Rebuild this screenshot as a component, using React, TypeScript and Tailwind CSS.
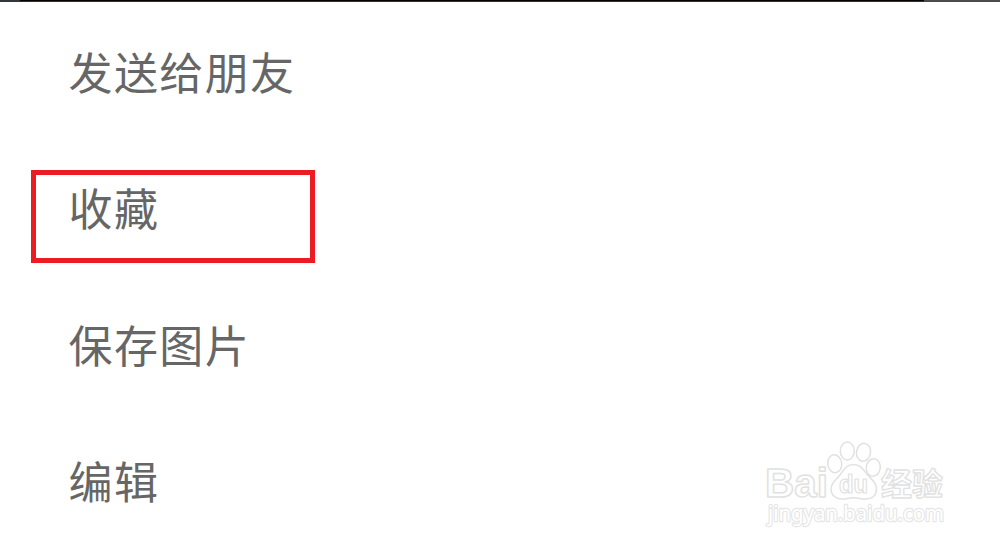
const menuItems = [
    { label: '发送给朋友' },
    { label: '收藏', highlighted: true },
    { label: '保存图片' },
    { label: '编辑' },
];

const Watermark = () => {
    return (
        <svg
            className="absolute left-[750px] top-[430px]"
            width="210"
            height="105"
            viewBox="0 0 210 105"
            fill="#fff"
            stroke="#e1e1e1"
            strokeWidth="1.5"
            strokeLinejoin="round"
        >
            {/* Paw */}
            <ellipse cx="84.7" cy="33.7" rx="7" ry="9" transform="rotate(-8 84.7 33.7)" />
            <ellipse cx="97.3" cy="21" rx="7" ry="9" />
            <ellipse cx="113.5" cy="22.3" rx="7" ry="9" transform="rotate(10 113.5 22.3)" />
            <ellipse cx="123.3" cy="37.5" rx="7" ry="8.8" transform="rotate(8 123.3 37.5)" />
            <path d="M103.5 34.5C96 34.5 93.5 40.5 90 45C86 50 81 52.5 81 59C81 65 85.5 69 92 69C96.5 69 99 67.8 103.5 67.8C108 67.8 111 69 115.5 69C122 69 126.5 65.5 126.5 59C126.5 52.5 122 50 117.5 45C113.5 40 111 34.5 103.5 34.5Z" />
            <text
                x="15"
                y="66.5"
                fontSize="41"
                fontWeight="bold"
                textLength="63"
                lengthAdjust="spacingAndGlyphs"
                style={{ fontFamily: '"Liberation Sans", Arial, sans-serif' }}
            >
                Bai
            </text>
            <text
                x="89"
                y="63"
                fontSize="26"
                fontWeight="bold"
                strokeWidth="1.2"
                textLength="29"
                lengthAdjust="spacingAndGlyphs"
                style={{ fontFamily: '"Liberation Sans", Arial, sans-serif' }}
            >
                du
            </text>
            <text
                x="131"
                y="65"
                fontSize="31"
                fontWeight="bold"
                strokeWidth="1.3"
                textLength="62"
                lengthAdjust="spacingAndGlyphs"
                style={{ fontFamily: '"Noto Sans CJK SC", sans-serif' }}
            >
                经验
            </text>
            <text
                x="18"
                y="91"
                fontSize="21"
                stroke="#e6e6e6"
                strokeWidth="2.4"
                paintOrder="stroke"
                textLength="176"
                lengthAdjust="spacingAndGlyphs"
                style={{ fontFamily: '"Noto Sans", sans-serif' }}
            >
                jingyan.baidu.com
            </text>
        </svg>
    );
};

const App = () => {
    return (
        <div className="relative h-[549px] w-[1000px] overflow-hidden bg-white font-['Noto_Sans_CJK_SC',sans-serif]">
            {/* Edge of the photo behind the sheet */}
            <div className="flex h-[2px]">
                <div className="w-[20px] bg-[#33363a]" />
                <div className="flex-1 border-b border-[#35302e] bg-[#080302]" />
                <div className="w-[76px] bg-[#4b4b50]" />
            </div>

            <ul className="flex flex-col pt-px">
                {menuItems.map((item) => (
                    <li key={item.label} className="relative flex h-[136.3px] items-center pl-[68.5px]">
                        {item.highlighted && (
                            <div className="absolute left-[31px] top-[31px] h-[93px] w-[284px] border-[5px] border-[#ed1c24]" />
                        )}
                        <span className="text-[44px] leading-none tracking-[1.4px] text-[#666]">{item.label}</span>
                    </li>
                ))}
            </ul>

            <Watermark />
        </div>
    );
};

export default App;
